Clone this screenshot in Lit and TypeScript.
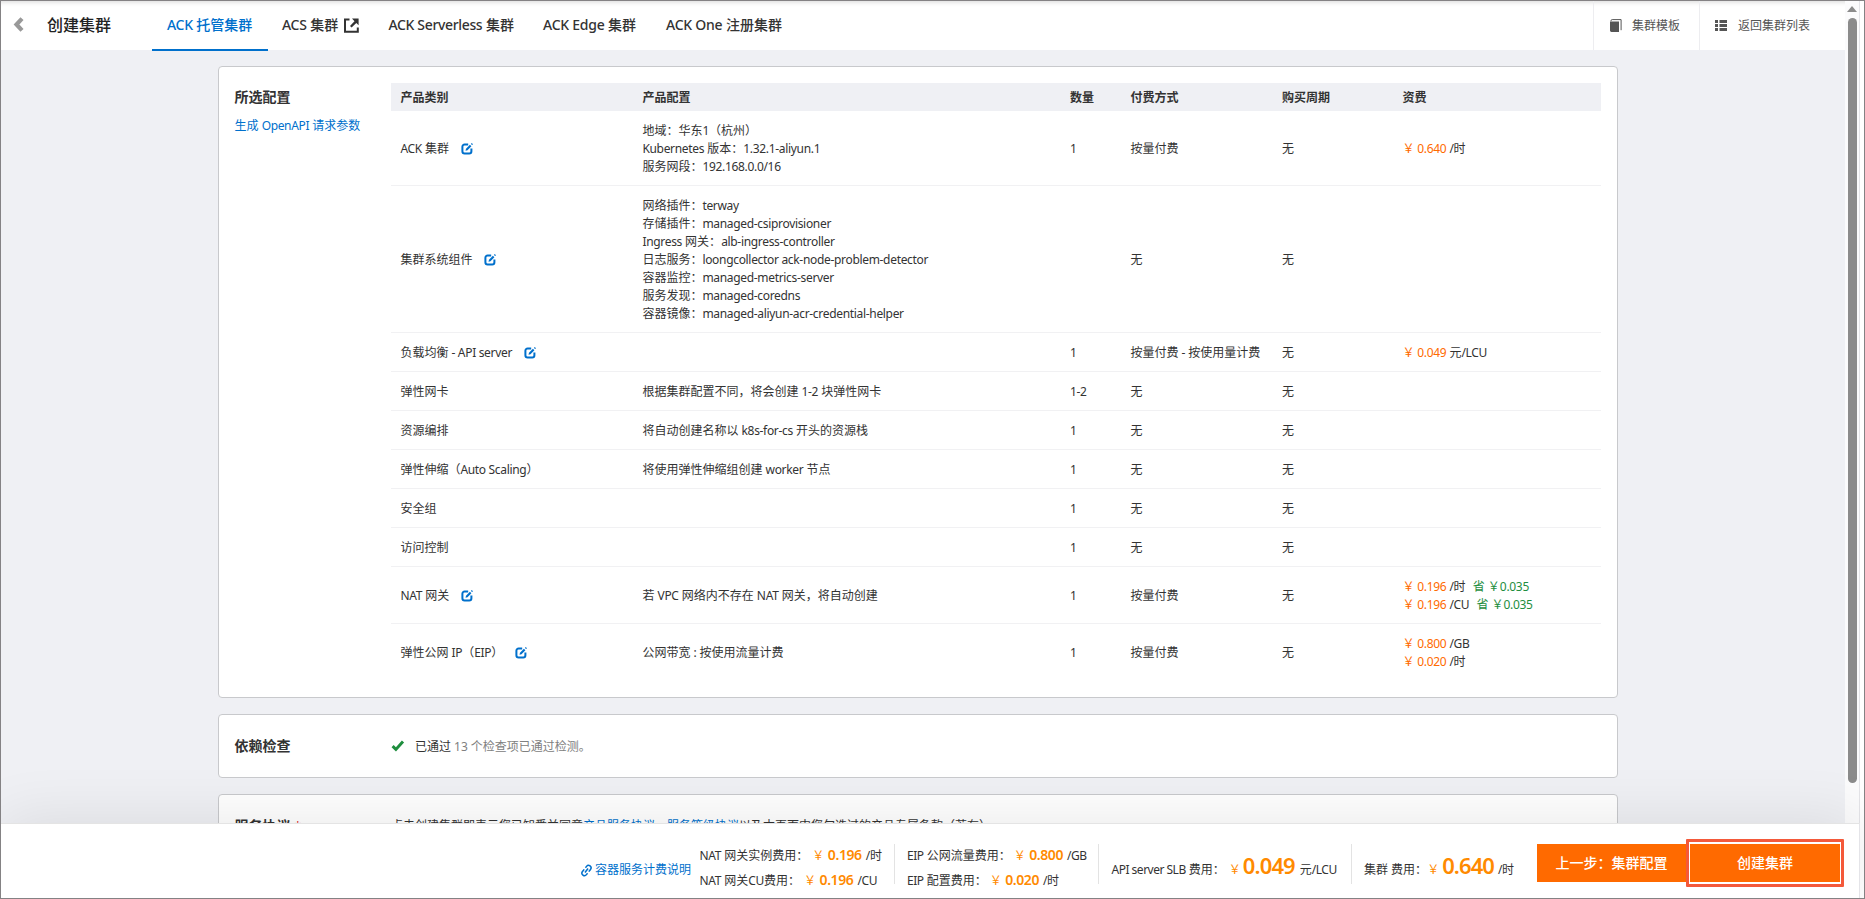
import { LitElement, html, css, svg, nothing } from "lit";
import { customElement } from "lit/decorators.js";

const sharp = css`
  :host { font-family: "Noto Sans", "Noto Sans CJK SC", sans-serif; }
`;

type Price = { v: string; unit: string; save?: string };
type Row = { name: string; edit?: boolean; conf?: string[]; qty?: string; pay: string; price?: Price[] };

const rows: Row[] = [
  { name: "ACK 集群", edit: true, conf: ["地域：华东1（杭州）", "Kubernetes 版本：1.32.1-aliyun.1", "服务网段：192.168.0.0/16"], qty: "1", pay: "按量付费", price: [{ v: "0.640", unit: "/时" }] },
  { name: "集群系统组件", edit: true, conf: ["网络插件：terway", "存储插件：managed-csiprovisioner", "Ingress 网关：alb-ingress-controller", "日志服务：loongcollector ack-node-problem-detector", "容器监控：managed-metrics-server", "服务发现：managed-coredns", "容器镜像：managed-aliyun-acr-credential-helper"], pay: "无" },
  { name: "负载均衡 - API server", edit: true, qty: "1", pay: "按量付费 - 按使用量计费", price: [{ v: "0.049", unit: "元/LCU" }] },
  { name: "弹性网卡", conf: ["根据集群配置不同，将会创建 1-2 块弹性网卡"], qty: "1-2", pay: "无" },
  { name: "资源编排", conf: ["将自动创建名称以 k8s-for-cs 开头的资源栈"], qty: "1", pay: "无" },
  { name: "弹性伸缩（Auto Scaling）", conf: ["将使用弹性伸缩组创建 worker 节点"], qty: "1", pay: "无" },
  { name: "安全组", qty: "1", pay: "无" },
  { name: "访问控制", qty: "1", pay: "无" },
  { name: "NAT 网关", edit: true, conf: ["若 VPC 网络内不存在 NAT 网关，将自动创建"], qty: "1", pay: "按量付费", price: [{ v: "0.196", unit: "/时", save: "￥0.035" }, { v: "0.196", unit: "/CU", save: "￥0.035" }] },
  { name: "弹性公网 IP（EIP）", edit: true, conf: ["公网带宽 : 按使用流量计费"], qty: "1", pay: "按量付费", price: [{ v: "0.800", unit: "/GB" }, { v: "0.020", unit: "/时" }] },
];

// Latin runs are set slightly tighter than the CJK text around them.
const mixed = (s: string) =>
  s.split(/([\x21-\x7e]+(?: [\x21-\x7e]+)*)/).map((p, i) => (i % 2 ? html`<span class="lat">${p}</span>` : p));

const editIcon = html`<svg class="edit" viewBox="0 0 12 12">${svg`
  <path d="M7.2 1.500H3.600A2.200 2.200 0 0 0 1.400 3.700v4.600a2.200 2.200 0 0 0 2.200 2.200h4.600a2.200 2.200 0 0 0 2.200-2.200V5.600" fill="none" stroke="#0070cc" stroke-width="2"/>
  <path d="M4.500 7.800l.5-2.100L8.900 1.800l1.500 1.500-3.900 3.900zM9.900.9l.9-.9L12 1.200l-.9.9z" fill="#0070cc"/>`}</svg>`;

const mixedCss = css`.lat { letter-spacing: -0.32px; }`;

@customElement("top-bar")
class TopBar extends LitElement {
  static styles = [sharp, css`
    :host { display: flex; height: 49px; background: #fff; color: #333; align-items: stretch; box-shadow: inset 0 6px 5px -5px #d8d8d8; }
    .back { width: 11px; height: 15px; margin: 16px 0 0 12px; }
    .title { margin-left: 23px; width: 105px; font-size: 16px; font-weight: 500; line-height: 48px; color: #222; }
    .tab { box-sizing: border-box; flex: none; padding: 0 0 0 15px; font-size: 14px; font-weight: 500; line-height: 47px; white-space: nowrap; height: 50px; position: relative; }
    .lat { letter-spacing: -0.3px; }
    .on { color: #0070cc; border-bottom: 2px solid #0070cc; }
    .w1 { width: 116px; } .w2 { width: 106px; padding-left: 14px; } .w3 { width: 154px; padding-left: 14.5px; } .w3 .lat { letter-spacing: -0.35px; } .w4 { width: 123px; } .w5 { width: 150px; } .w4 .lat, .w5 .lat { letter-spacing: -0.25px; }
    .ext { width: 15px; height: 15px; vertical-align: -3px; margin-left: 6px; }
    .sp { flex: 1; }
    .act { display: flex; align-items: center; border-left: 1px solid #ededf0; box-sizing: border-box; font-size: 12px; color: #555; padding-bottom: 1px; }
    .a1 { width: 106px; padding-left: 16px; gap: 10px; } .a2 { width: 146px; padding-left: 15px; gap: 11px; }
    .act svg { width: 12px; height: 13px; }
  `];
  render() {
    const l = (s: string) => html`<span class="lat">${s}</span>`;
    return html`
      <svg class="back" viewBox="0 0 11 15"><path d="M9 1.600L3.500 7.500 9 13.400" fill="none" stroke="#999" stroke-width="4.200"/></svg>
      <div class="title">创建集群</div>
      <div class="tab w1 on">${l("ACK")} 托管集群</div>
      <div class="tab w2">${l("ACS")} 集群<svg class="ext" viewBox="0 0 15 15"><path d="M5.500 1.500H1v12.300h12.800V9.500" fill="none" stroke="#333" stroke-width="2"/><path d="M8 .6h6.600v6.600l-2.300-2.300-4.700 4.700L6 8l4.500-4.700z" fill="#333"/></svg></div>
      <div class="tab w3">${l("ACK Serverless")} 集群</div>
      <div class="tab w4">${l("ACK Edge")} 集群</div>
      <div class="tab w5">${l("ACK One")} 注册集群</div>
      <div class="sp"></div>
      <div class="act a1"><svg viewBox="0 0 12 13"><path d="M0 2.600h9V13H1.400A1.400 1.400 0 0 1 0 11.600z" fill="#555"/><path d="M1 2.200V1.800A1.200 1.200 0 0 1 2.200.6h8.900v10.600" fill="none" stroke="#555"/></svg>集群模板</div>
      <div class="act a2"><svg viewBox="0 0 12 13"><path d="M0 1h3v3H0zM4.500 1H12v3H4.500zM0 5h3v3H0zM4.500 5H12v3H4.500zM0 9h3v3H0zM4.500 9H12v3H4.500z" fill="#555"/></svg>返回集群列表</div>`;
  }
}

@customElement("config-table")
class ConfigTable extends LitElement {
  static styles = [sharp, mixedCss, css`
    :host { display: block; width: 1210px; font-size: 12px; line-height: 18px; color: #333; }
    .row { display: grid; grid-template-columns: 242px 427.5px 60.5px 151.5px 120.500px 1fr; align-items: center; padding: 11px 0 9px; border-bottom: 1px solid #f1f1f3; }
    .row > div { padding-left: 9.400px; white-space: nowrap; }
    .row:last-child { border-bottom: 0; }
    .head { background: #eff0f4; padding: 6px 0 4px; border: 0; font-weight: 600; }
    .edit { width: 12px; height: 12px; margin-left: 11.5px; vertical-align: -2px; }
    .y { color: #ff6a00; }
    .g { color: #1e8e3e; margin-left: 4px; }
  `];
  render() {
    return html`
      <div class="row head">${["产品类别", "产品配置", "数量", "付费方式", "购买周期", "资费"].map((h) => html`<div>${h}</div>`)}</div>
      ${rows.map((r) => html`<div class="row">
        <div>${mixed(r.name)}${r.edit ? editIcon : nothing}</div>
        <div>${(r.conf ?? []).map((c) => html`<div>${mixed(c)}</div>`)}</div>
        <div>${mixed(r.qty ?? "")}</div><div>${mixed(r.pay)}</div><div>无</div>
        <div>${(r.price ?? []).map((p) => html`<div><span class="y">￥<span class="lat"> ${p.v}</span></span> ${mixed(p.unit)}${p.save ? html` <span class="g">省 ${mixed(p.save)}</span>` : nothing}</div>`)}</div>
      </div>`)}`;
  }
}

@customElement("fee-bar")
class FeeBar extends LitElement {
  static styles = [sharp, mixedCss, css`
    :host { display: flex; box-sizing: border-box; height: 75px; border-top: 1px solid #e4e4e4; background: #fff; font-size: 12px; line-height: 18px; color: #333; padding: 20px 14px 0 579px; box-shadow: 0 -4px 60px rgba(0, 0, 0, 0.09); }
    .link { display: flex; width: 119px; height: 18px; margin-top: 17px; gap: 2px; align-items: center; color: #0070cc; white-space: nowrap; }
    .link svg { width: 13px; height: 13px; }
    .grp { box-sizing: border-box; height: 40px; display: flex; flex-direction: column; justify-content: space-between; border-right: 1px solid #e3e3e3; white-space: nowrap; }
    .fee { display: flex; align-items: baseline; height: 18px; line-height: 18px; margin-top: 2px; }
    .fee + .fee { margin-top: 0; margin-bottom: -5px; }
    .c { color: #ff8a00; margin-left: 4px; }
    .v { color: #ff8a00; font-size: 14px; font-weight: 600; letter-spacing: -0.4px; margin: 0 4px 0 3.500px; }
    .one .v { font-size: 22px; letter-spacing: -0.900px; margin: 0 4px 0 3px; }
    .one .fee { margin-top: 9px; height: auto; line-height: 24px; }
    .one .lat, .g2 .lat { letter-spacing: -0.5px; }
    .g2 .c { margin-left: 3px; } .g3 .v { margin-left: 2px; margin-right: 5px; } .g4 .c { margin-left: 0; }
    .g1 { width: 196px; padding-left: 0.5px; } .g2 { width: 204px; padding-left: 12px; } .g3 { width: 253px; padding-left: 12.5px; } .g4 { width: 185px; padding-left: 12px; border: 0; }
    .btn { height: 38px; background: #ff6a00; color: #fff; font-size: 14px; font-weight: 500; line-height: 38px; text-align: center; }
    .prev { width: 149px; flex: none; }
    .ring { box-sizing: border-box; flex: none; width: 158px; height: 48px; margin-top: -5px; border: 3px solid #f4593a; border-radius: 1px; background: #fff; padding: 2px 1px; }
  `];
  fee(label: string, v: string, unit: string) {
    return html`<div class="fee"><span>${mixed(label)}</span><span class="c">￥</span><span class="v">${v}</span><span>${mixed(unit)}</span></div>`;
  }
  render() {
    return html`
      <div class="link"><svg viewBox="0 0 13 13"><g fill="none" stroke="#0070cc" stroke-width="1.500" transform="rotate(-52 6.500 6.500)"><path d="M6 4H3.200a2.500 2.500 0 0 0 0 5H5M7 9h2.800a2.500 2.500 0 0 0 0-5H8M4 6.500h5"/></g></svg>容器服务计费说明</div>
      <div class="grp g1">${this.fee("NAT 网关实例费用：", "0.196", "/时")}${this.fee("NAT 网关CU费用：", "0.196", "/CU")}</div>
      <div class="grp g2">${this.fee("EIP 公网流量费用：", "0.800", "/GB")}${this.fee("EIP 配置费用：", "0.020", "/时")}</div>
      <div class="grp one g3">${this.fee("API server SLB 费用：", "0.049", "元/LCU")}</div>
      <div class="grp one g4">${this.fee("集群 费用：", "0.640", "/时")}</div>
      <div class="btn prev">上一步：集群配置</div>
      <div class="ring"><div class="btn">创建集群</div></div>`;
  }
}

@customElement("app-root")
class AppRoot extends LitElement {
  static styles = [sharp, css`
    :host { display: flex; flex-direction: column; box-sizing: border-box; width: 1865px; height: 899px; overflow: hidden; border: 1px solid #848284; background: #fff; color: #333; font-size: 12px; }
    .view { display: flex; height: 822px; flex: none; }
    .main { width: 1844px; height: 822px; overflow: hidden; background: #eff0f4; }
    .card { box-sizing: border-box; width: 1400px; margin-left: 217px; border: 1px solid #c8c9cc; border-radius: 4px; background: #fff; display: flex; padding: 16px 15px 16px 15px; margin-bottom: 16px; }
    .first { margin-top: 16px; height: 632px; }
    .check { height: 64px; align-items: center; padding-top: 0; padding-bottom: 0; }
    .side { width: 157px; font-size: 14px; font-weight: 600; text-indent: 0.5px; }
    .check .side { padding-bottom: 2px; }
    .side .t { line-height: 28px; }
    .api { font-size: 12px; font-weight: 400; color: #0070cc; line-height: 18px; margin-top: 6px; white-space: nowrap; }
    .lat { letter-spacing: -0.35px; }
    .ok { width: 14px; height: 12px; margin-right: 10px; }
    .muted { color: #808080; margin-left: 3px; }
    .star { color: #e03030; font-weight: 400; margin-left: 4px; font-size: 12px; }
    .terms { white-space: nowrap; padding-bottom: 2px; }
    .terms b { font-weight: 400; color: #0070cc; }
    .bar { width: 14px; display: flex; flex-direction: column; align-items: center; background: #fbfbfc; border-right: 1px solid #e4e4e8; }
    .up { width: 10px; height: 6px; margin-top: 5px; }
    .thumb { width: 9px; height: 765px; border-radius: 5px; background: #8b8b8b; margin-top: 6px; }
    fee-bar { flex: none; position: relative; width: 1859px; border-right: 1px solid #e4e4e8; }
  `];
  render() {
    return html`
      <div class="view">
        <div class="main">
          <top-bar></top-bar>
          <div class="card first">
            <div class="side"><div class="t">所选配置</div><div class="api">生成 <span class="lat">OpenAPI</span> 请求参数</div></div>
            <config-table></config-table>
          </div>
          <div class="card check">
            <div class="side">依赖检查</div>
            <svg class="ok" viewBox="0 0 14 12"><path d="M1.600 6.200l3.300 3.200L12 1.600" fill="none" stroke="#1e8e3e" stroke-width="3"/></svg>
            <span>已通过</span><span class="muted">13 个检查项已通过检测。</span>
          </div>
          <div class="card check">
            <div class="side">服务协议<span class="star">*</span></div>
            <div class="terms">点击创建集群即表示您已知悉并同意<b>产品服务协议</b>、<b>服务等级协议</b>以及本页面中您勾选过的产品专属条款（若有）</div>
          </div>
        </div>
        <div class="bar"><svg class="up" viewBox="0 0 10 6"><path d="M0 6L5 0l5 6z" fill="#8b8b8b"/></svg><div class="thumb"></div></div>
      </div>
      <fee-bar></fee-bar>`;
  }
}
